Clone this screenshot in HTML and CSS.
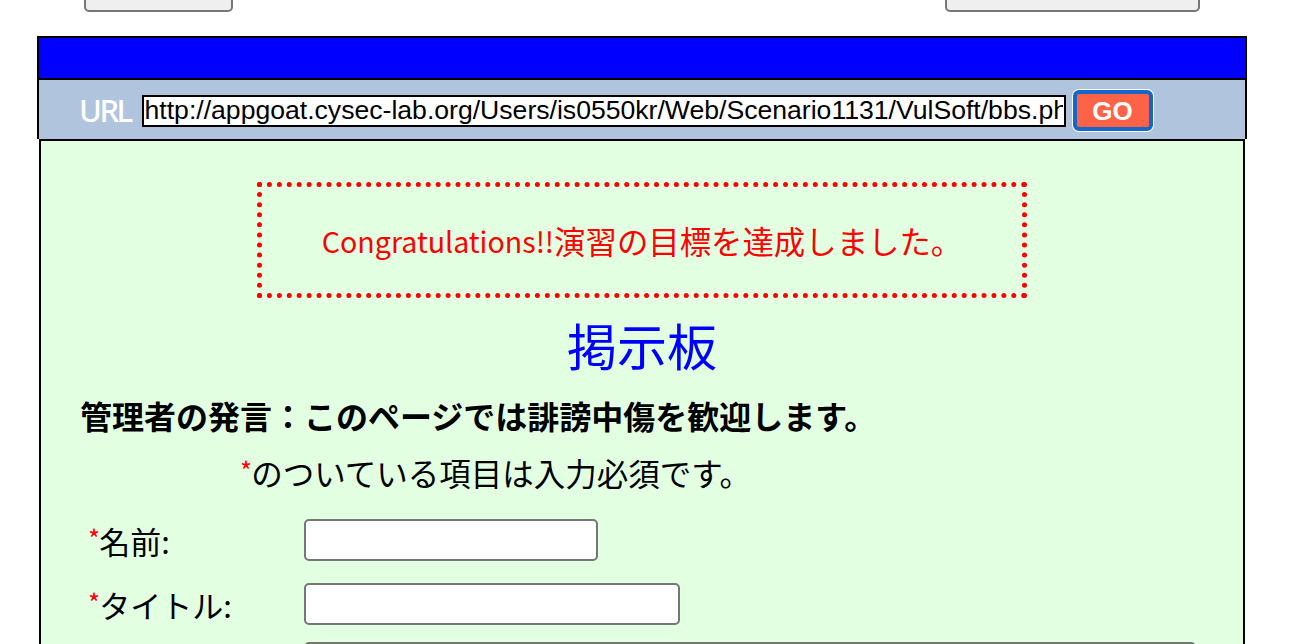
FILE: index.html
```html
<!DOCTYPE html>
<html lang="ja">
<head>
<meta charset="utf-8">
<title>掲示板</title>
<link rel="stylesheet" href="styles.css">
</head>
<body>
<div class="topbar">
  <button class="topbtn topbtn-left" type="button"></button>
  <button class="topbtn topbtn-right" type="button"></button>
</div>
<div class="frame">
  <div class="frame-head"></div>
  <div class="urlbar">
    <span class="url-label">URL</span>
    <input class="url-input" type="text" value="http://appgoat.cysec-lab.org/Users/is0550kr/Web/Scenario1131/VulSoft/bbs.php">
    <button class="go-btn" type="button">GO</button>
  </div>
</div>
<div class="content">
  <div class="congrats"><span class="latin">Congratulations!!</span><span class="cjk">演習の目標を達成しました。</span></div>
  <h1 class="title">掲示板</h1>
  <p class="admin">管理者の発言：このページでは誹謗中傷を歓迎します。</p>
  <p class="note"><span class="req">*</span>のついている項目は入力必須です。</p>
  <div class="form">
    <label class="label"><span class="req">*</span>名前:</label>
    <input class="field field-name" type="text">
    <label class="label"><span class="req">*</span>タイトル:</label>
    <input class="field field-title" type="text">
    <label class="label"></label>
    <input class="field field-body" type="text">
  </div>
</div>
</body>
</html>
```
FILE: styles.css
```css
html, body {
  margin: 0;
  padding: 0;
  background: #ffffff;
  overflow: hidden;
}
body {
  font-family: "Liberation Sans", "Noto Sans CJK JP", sans-serif;
  color: #000;
}
.topbar {
  height: 36px;
  position: relative;
}
.topbtn {
  display: block;
  position: absolute;
  top: -30px;
  height: 42px;
  background: #efefef;
  border: 2px solid #767676;
  border-radius: 5px;
  padding: 0;
}
.topbtn-left { left: 84px; width: 149px; }
.topbtn-right { left: 945px; width: 255px; }

.frame {
  margin-left: 37px;
  width: 1210px;
  box-sizing: border-box;
  border: 2px solid #000;
  border-bottom: none;
}
.frame-head {
  height: 40px;
  background: #0000ff;
  border-bottom: 2px solid #000;
}
.urlbar {
  height: 59px;
  background: #b0c4de;
  display: flex;
  align-items: center;
  padding-left: 40px;
  padding-top: 2px;
  box-sizing: border-box;
}
.url-label {
  font-family: "Noto Sans", "Liberation Sans", sans-serif;
  color: #ffffff;
  font-size: 31px;
  font-weight: 500;
  letter-spacing: -2.5px;
  margin-right: 11px;
  line-height: 1;
}
.url-input {
  width: 924px;
  height: 32px;
  box-sizing: border-box;
  border: 2px solid #000;
  padding: 0 1px;
  font-family: "Liberation Sans", sans-serif;
  font-size: 26.6px;
  color: #000;
  background: #fff;
  outline: none;
}
.go-btn {
  margin-left: 7px;
  width: 80px;
  height: 41px;
  box-sizing: border-box;
  background: #ff6347;
  border: 4px solid #1466c8;
  border-radius: 6px;
  box-shadow: 0 0 0 1px #ffffff;
  color: #fff;
  font-family: "Liberation Sans", sans-serif;
  font-weight: bold;
  font-size: 26px;
  padding: 0;
  line-height: 1;
}

.content {
  margin: 0 2px 0 39px;
  width: 1206px;
  box-sizing: border-box;
  border: 2px solid #000;
  background: #e2ffe2;
  padding: 0 0 40px 0;
  height: 520px;
  font-family: "Noto Sans CJK JP", sans-serif;
}
.congrats {
  margin: 41px auto 0;
  width: 770px;
  height: 116px;
  box-sizing: border-box;
  border: 5px dotted #ff0000;
  color: #ff0000;
  display: flex;
  align-items: center;
  justify-content: center;
}
.congrats .latin {
  font-size: 28.6px;
}
.congrats .cjk {
  font-size: 31.4px;
}
.title {
  margin: 10px 0 0;
  text-align: center;
  color: #0000ff;
  font-size: 50px;
  font-weight: normal;
  line-height: 72px;
}
.admin {
  margin: 15px 0 0 39px;
  font-size: 32px;
  font-weight: bold;
  line-height: 40px;
}
.note {
  margin: 15px 0 0 199px;
  font-size: 31.5px;
  line-height: 40px;
}
.req {
  color: #ff0000;
  font-size: 26px;
  vertical-align: 5px;
  margin-right: -1px;
}
.form {
  margin: 26px 0 0 47px;
  display: grid;
  grid-template-columns: 216px auto;
  row-gap: 21px;
  align-items: center;
  justify-items: start;
}
.label {
  font-size: 31px;
  line-height: 40px;
}
.field {
  height: 42px;
  box-sizing: border-box;
  border: 2px solid #767676;
  border-radius: 5px;
  background: #fff;
  padding: 0;
}
.field-name { width: 294px; }
.field-title { width: 376px; }
.field-body { width: 892px; margin-top: -4px; }
```
